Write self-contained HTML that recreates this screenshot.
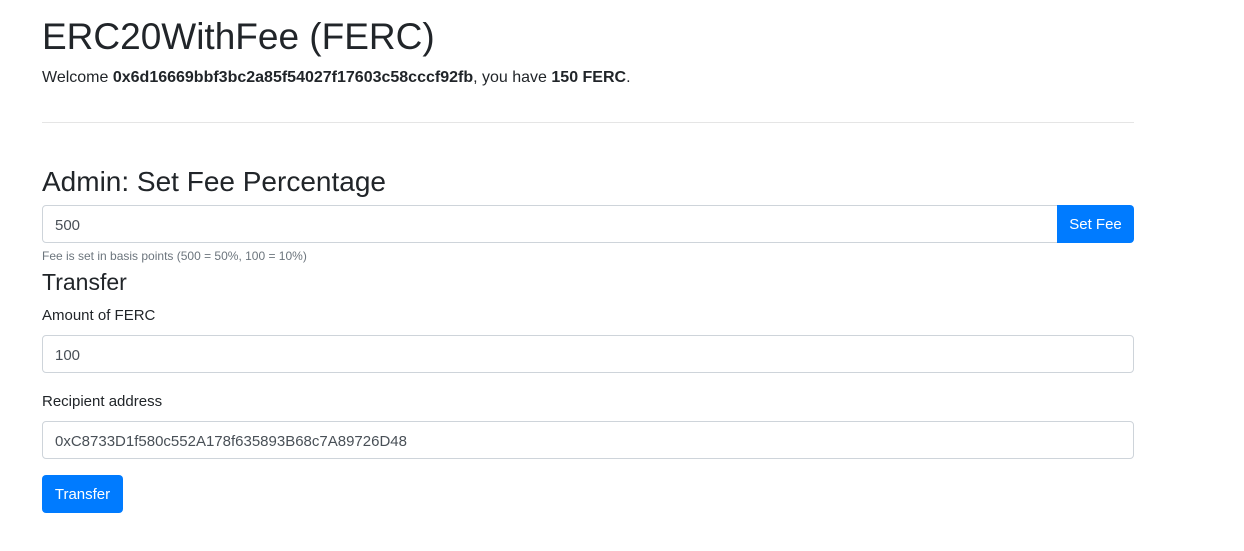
<!DOCTYPE html>
<html><head><meta charset="utf-8"><style>
body{margin:0;width:1244px;height:551px;background:#fff;font-family:"Liberation Sans",sans-serif;color:#212529;position:relative;overflow:hidden}
.a{position:absolute;left:42px;margin:0}
h1{font-size:37px;font-weight:500;line-height:48px}
h3{font-size:28px;font-weight:500;line-height:34px}
h4{font-size:23px;font-weight:500;line-height:28px}
p{font-size:16px;line-height:24px}
label{font-size:15px;line-height:24px}
.inp{box-sizing:border-box;height:38px;border:1px solid #ced4da;border-radius:4px;padding:2px 12px 0;font-size:15px;line-height:36px;color:#495057}
.btn{box-sizing:border-box;height:38px;padding-top:2px;background:#007bff;color:#fff;border-radius:4px;font-size:15px;line-height:36px;text-align:center}
small{font-size:12px;color:#6c757d;line-height:18px}
hr{position:absolute;left:42px;width:1092px;top:122px;margin:0;border:0;border-top:1px solid #e5e5e5}
</style></head><body>
<h1 class="a" style="top:13px">ERC20WithFee (FERC)</h1>
<p class="a" style="top:66px">Welcome <b>0x6d16669bbf3bc2a85f54027f17603c58cccf92fb</b>, you have <b>150 FERC</b>.</p>
<hr>
<h3 class="a" style="top:165px">Admin: Set Fee Percentage</h3>
<div class="a inp" style="top:205px;width:1016px;border-radius:4px 0 0 4px">500</div>
<div class="a btn" style="top:205px;left:1057px;width:77px;border-radius:0 4px 4px 0">Set Fee</div>
<small class="a" style="top:247px">Fee is set in basis points (500 = 50%, 100 = 10%)</small>
<h4 class="a" style="top:268px">Transfer</h4>
<label class="a" style="top:304px">Amount of FERC</label>
<div class="a inp" style="top:335px;width:1092px">100</div>
<label class="a" style="top:390px">Recipient address</label>
<div class="a inp" style="top:421px;width:1092px">0xC8733D1f580c552A178f635893B68c7A89726D48</div>
<div class="a btn" style="top:475px;width:81px">Transfer</div>
</body></html>
